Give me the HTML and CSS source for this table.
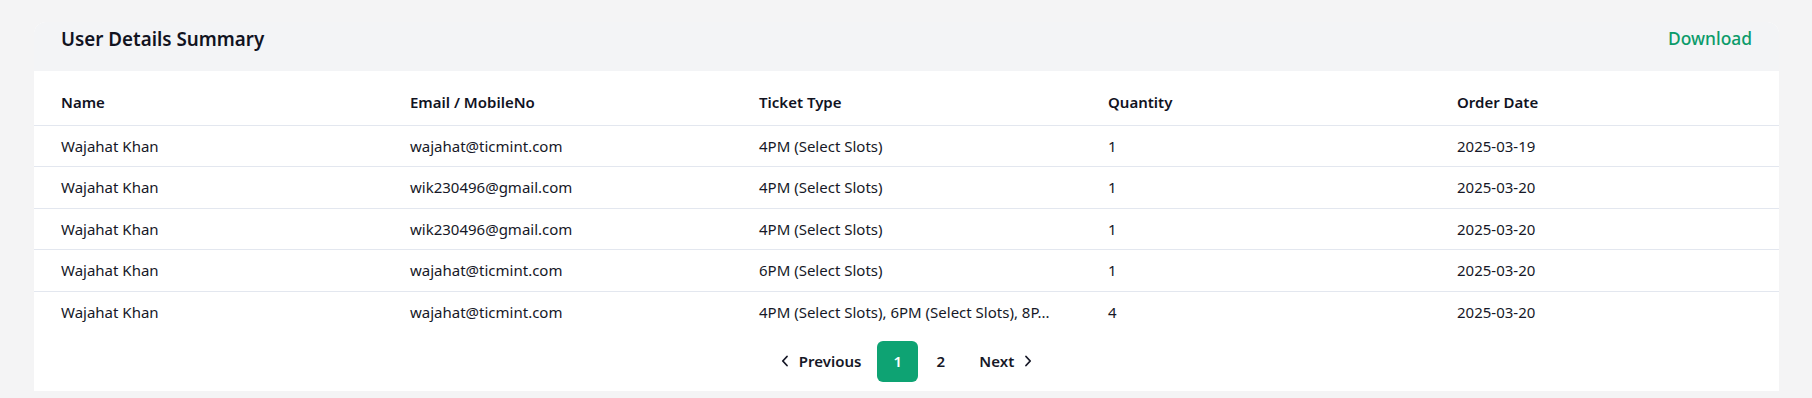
FILE: index.html
```html
<!DOCTYPE html>
<html lang="en">
<head>
<meta charset="utf-8">
<title>User Details Summary</title>
<link rel="stylesheet" href="styles.css">
</head>
<body>
<div class="page">
  <section class="card">
    <header class="card-header">
      <h2 class="card-title">User Details Summary</h2>
      <a class="download" href="#">Download</a>
    </header>
    <table class="summary">
      <thead>
        <tr>
          <th>Name</th>
          <th>Email / MobileNo</th>
          <th>Ticket Type</th>
          <th>Quantity</th>
          <th>Order Date</th>
        </tr>
      </thead>
      <tbody>
        <tr><td>Wajahat Khan</td><td>wajahat@ticmint.com</td><td>4PM (Select Slots)</td><td>1</td><td>2025-03-19</td></tr>
        <tr><td>Wajahat Khan</td><td>wik230496@gmail.com</td><td>4PM (Select Slots)</td><td>1</td><td>2025-03-20</td></tr>
        <tr><td>Wajahat Khan</td><td>wik230496@gmail.com</td><td>4PM (Select Slots)</td><td>1</td><td>2025-03-20</td></tr>
        <tr><td>Wajahat Khan</td><td>wajahat@ticmint.com</td><td>6PM (Select Slots)</td><td>1</td><td>2025-03-20</td></tr>
        <tr class="last"><td>Wajahat Khan</td><td>wajahat@ticmint.com</td><td>4PM (Select Slots), 6PM (Select Slots), 8P...</td><td>4</td><td>2025-03-20</td></tr>
      </tbody>
    </table>
    <nav class="pager">
      <button class="pager-link prev">
        <svg class="chev" viewBox="0 0 8 12" width="8" height="12"><path d="M6 1.5 L1.8 6 L6 10.5" fill="none" stroke="currentColor" stroke-width="1.8" stroke-linecap="round" stroke-linejoin="round"/></svg>
        <span>Previous</span>
      </button>
      <button class="pager-num active">1</button>
      <button class="pager-num">2</button>
      <button class="pager-link next">
        <span>Next</span>
        <svg class="chev" viewBox="0 0 8 12" width="8" height="12"><path d="M2 1.5 L6.2 6 L2 10.5" fill="none" stroke="currentColor" stroke-width="1.8" stroke-linecap="round" stroke-linejoin="round"/></svg>
      </button>
    </nav>
  </section>
</div>
</body>
</html>
```

FILE: styles.css
```css
html, body {
  margin: 0;
  padding: 0;
  background: #f4f4f5;
}

body {
  font-family: "Noto Sans", "Open Sans", "Liberation Sans", sans-serif;
  color: #161827;
}

.page {
  padding: 22px 33px 0 34px;
}

.card {
  background: #ffffff;
  border-radius: 12px 12px 0 0;
  overflow: hidden;
}

.card-header {
  display: flex;
  justify-content: space-between;
  align-items: flex-start;
  background: #f3f4f6;
  padding: 5px 27px 20px 27px;
  height: 24px;
}

.card-title {
  margin: 0;
  font-size: 18.8px;
  line-height: 24px;
  font-weight: 600;
  color: #11131f;
}

.download {
  font-size: 17.4px;
  line-height: 22px;
  font-weight: 500;
  color: #0b9b6a;
  text-decoration: none;
}

.summary {
  width: 100%;
  border-collapse: collapse;
  table-layout: fixed;
  font-size: 15px;
}

.summary th,
.summary td {
  text-align: left;
  padding: 10px 27px;
  line-height: 20.6px;
  white-space: nowrap;
  overflow: hidden;
}

.summary th {
  font-weight: 600;
  padding-top: 21px;
  padding-bottom: 12px;
  color: #11131f;
}

.summary thead tr,
.summary tbody tr {
  border-bottom: 1px solid #e3e7ef;
}

.summary tbody tr.last {
  border-bottom: none;
}

.pager {
  display: flex;
  justify-content: center;
  align-items: center;
  padding: 8px 0 9px;
}

.pager button {
  font-family: inherit;
  border: none;
  background: transparent;
  color: #161827;
  font-size: 15px;
  font-weight: 600;
  cursor: pointer;
  padding: 0;
}

.pager-link {
  display: flex;
  align-items: center;
  gap: 10px;
  height: 41px;
}

.pager-link.prev {
  margin-right: 16px;
}

.pager-link.next {
  margin-left: 18px;
}

.pager-num {
  width: 41px;
  height: 41px;
  border-radius: 6px;
}

.pager-num + .pager-num {
  margin-left: 2px;
}

.pager-num.active {
  background: #0ea373;
  color: #ffffff;
}

.chev {
  display: block;
}
```
